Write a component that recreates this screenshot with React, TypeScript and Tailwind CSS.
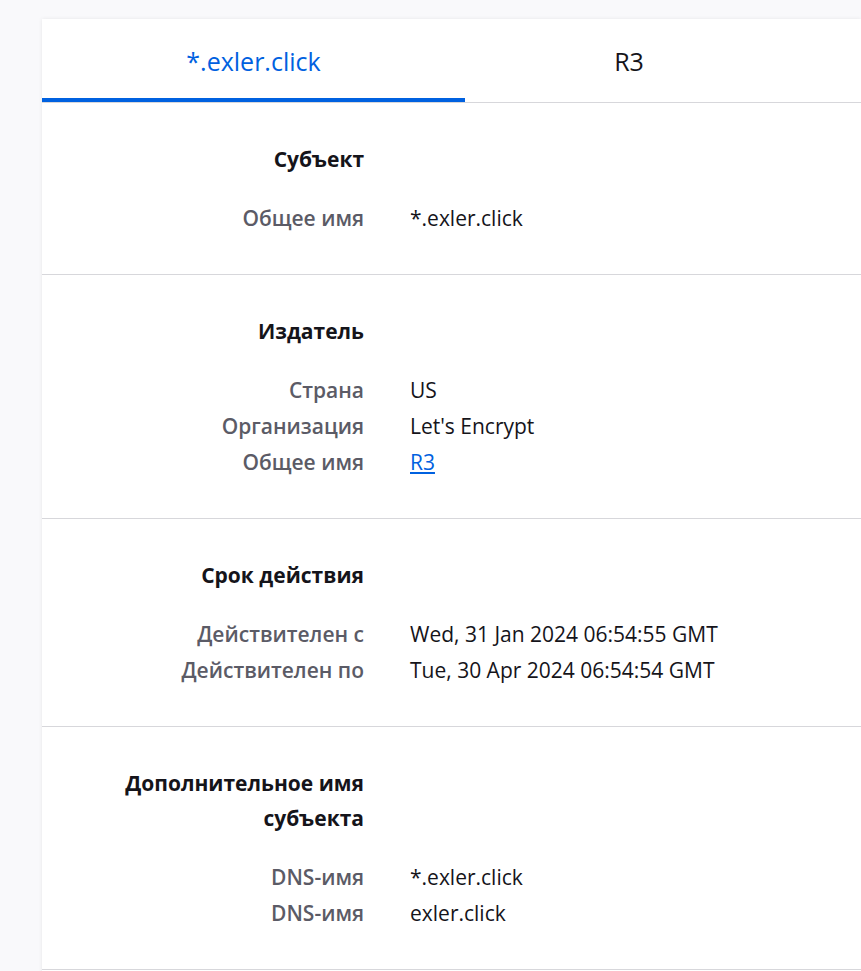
const font = { fontFamily: '"Open Sans", "Noto Sans", sans-serif' };

type Row = { label: string; value: string; link?: boolean };

const sections: { title: React.ReactNode; rows: Row[] }[] = [
  {
    title: 'Субъект',
    rows: [{ label: 'Общее имя', value: '*.exler.click' }],
  },
  {
    title: 'Издатель',
    rows: [
      { label: 'Страна', value: 'US' },
      { label: 'Организация', value: "Let's Encrypt" },
      { label: 'Общее имя', value: 'R3', link: true },
    ],
  },
  {
    title: 'Срок действия',
    rows: [
      { label: 'Действителен с', value: 'Wed, 31 Jan 2024 06:54:55 GMT' },
      { label: 'Действителен по', value: 'Tue, 30 Apr 2024 06:54:54 GMT' },
    ],
  },
  {
    title: (
      <>
        Дополнительное имя
        <br />
        субъекта
      </>
    ),
    rows: [
      { label: 'DNS-имя', value: '*.exler.click' },
      { label: 'DNS-имя', value: 'exler.click' },
    ],
  },
];

const Section = ({ title, rows }: { title: React.ReactNode; rows: Row[] }) => (
  <div className="border-b border-[#d7d7db] pt-[39px] pb-[38px]">
    <div className="flex">
      <div className="w-[322px] shrink-0 text-right text-[21px] leading-[35px] font-bold text-[#15141a]">
        {title}
      </div>
    </div>
    <div className="mt-[23px] flex flex-col">
      {rows.map((r, i) => (
        <div key={i} className="flex text-[21px] leading-[36px]">
          <div className="w-[322px] shrink-0 text-right font-semibold text-[#5b5b66]">
            {r.label}
          </div>
          <div className="ml-[46px] text-[#15141a]">
            {r.link ? (
              <a href="#" className="text-[#0061e0] underline">
                {r.value}
              </a>
            ) : (
              r.value
            )}
          </div>
        </div>
      ))}
    </div>
  </div>
);

export default function App() {
  return (
    <div className="min-h-screen overflow-hidden bg-[#f9f9fb] pt-[19px] pl-[42px]" style={font}>
      <div className="min-h-[960px] bg-white shadow-[0_0_4px_rgba(0,0,0,0.08)]">
        <div className="flex border-b border-[#d7d7db]">
          <div className="flex h-[83px] w-[423px] items-center justify-center border-b-4 border-[#0061e0] pt-[6px] text-[25px] text-[#0061e0]">
            *.exler.click
          </div>
          <div className="flex h-[83px] w-[328px] items-center justify-center border-b-4 border-transparent pt-[6px] text-[25px] text-[#15141a]">
            R3
          </div>
        </div>
        {sections.map((s, i) => (
          <Section key={i} title={s.title} rows={s.rows} />
        ))}
      </div>
    </div>
  );
}
